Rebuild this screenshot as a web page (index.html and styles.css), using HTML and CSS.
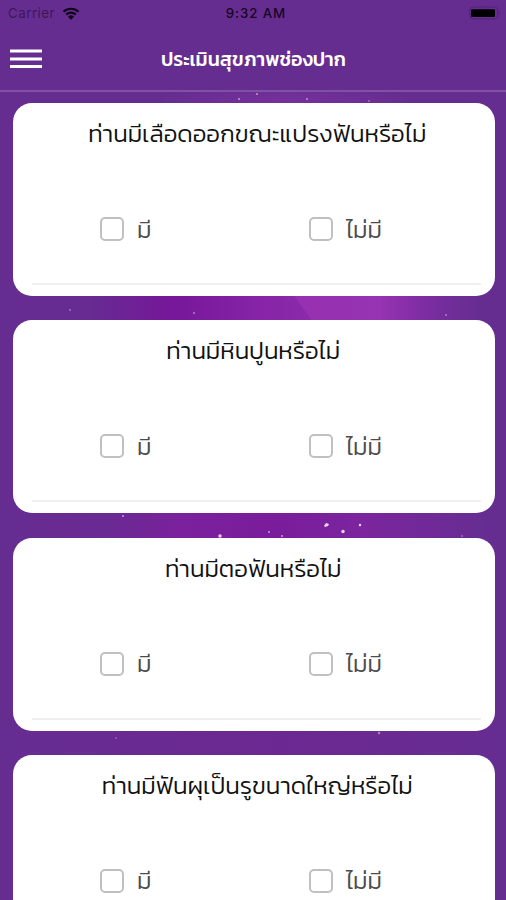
FILE: index.html
```html
<!DOCTYPE html>
<html lang="th">
<head>
<meta charset="utf-8">
<title>ประเมินสุขภาพช่องปาก</title>
<link rel="stylesheet" href="styles.css">
</head>
<body>
<svg class="backdrop" viewBox="0 0 506 900" aria-hidden="true">
  <defs>
    <radialGradient id="top"><stop offset="0" stop-color="#75309b"/><stop offset="1" stop-color="#672d91"/></radialGradient>
    <linearGradient id="glow"><stop offset="0" stop-color="#662d91"/><stop offset=".18" stop-color="#672b92"/><stop offset=".34" stop-color="#761799"/><stop offset=".52" stop-color="#8724a7"/><stop offset=".68" stop-color="#8d2fad"/><stop offset=".8" stop-color="#822da5"/><stop offset=".95" stop-color="#662d91"/></linearGradient>
    <linearGradient id="ray"><stop offset="0" stop-color="#9730b2"/><stop offset=".6" stop-color="#9634b2"/><stop offset="1" stop-color="#7f2ba3" stop-opacity="0"/></linearGradient>
    <linearGradient id="mid"><stop offset="0" stop-color="#662d91"/><stop offset=".22" stop-color="#6a2993"/><stop offset=".36" stop-color="#7b219c"/><stop offset=".54" stop-color="#7a1c9b"/><stop offset=".72" stop-color="#7b259e"/><stop offset=".96" stop-color="#662d91"/></linearGradient>
    <linearGradient id="low"><stop offset="0" stop-color="#662d91"/><stop offset=".55" stop-color="#6c2892"/><stop offset="1" stop-color="#662d91"/></linearGradient>
  </defs>
  <ellipse cx="285" cy="100" rx="120" ry="14" fill="url(#top)"/>
  <path fill="url(#glow)" d="M0 290h506v36H0z"/>
  <path fill="url(#ray)" d="M290 290h150v36H316z"/>
  <path fill="url(#mid)" d="M0 508h506v36H0z"/>
  <path fill="url(#low)" d="M0 725h506v36H0z"/>
  <g fill="#c29bd2">
    <circle cx="239" cy="99" r="1"/><circle cx="257" cy="94" r="1"/><circle cx="307" cy="99" r="1"/><circle cx="369" cy="101" r=".8"/>
    <circle cx="70" cy="310" r="1.1" opacity=".6"/><circle cx="194" cy="313" r="1.2" opacity=".6"/><circle cx="446" cy="315" r="1.1" opacity=".7"/>
    <circle cx="123" cy="516" r="1"/><circle cx="269" cy="532" r="1"/><circle cx="282" cy="536" r="1.1"/><circle cx="462" cy="536" r=".8"/>
    <circle cx="116" cy="738" r=".9" opacity=".5"/><circle cx="379" cy="733" r="1.3" opacity=".7"/>
  </g>
  <g fill="#f2d7f7">
    <circle cx="220" cy="536" r="1.7"/><circle cx="343" cy="531.500" r="1.7"/><circle cx="360" cy="525" r="1.2"/><path d="m324 526 2-3 3 1-1 2-3 1z"/>
  </g>
</svg>

<header class="header">
  <div class="status">
    <span class="carrier">Carrier
      <svg class="wifi" viewBox="0 0 18 13" aria-hidden="true"><path d="M1.500 4.700a11 11 0 0 1 15 0M4.200 7.600a7 7 0 0 1 9.600 0" fill="none" stroke="currentColor" stroke-width="2.200"/><path d="M6 9.700a4.300 4.300 0 0 1 6 0L9 12.800z" fill="currentColor"/></svg>
    </span>
    <span class="time">9:32 AM</span>
    <svg class="battery" viewBox="0 0 32 14" aria-hidden="true"><rect x=".8" y="1" width="28" height="12" rx="3.500" fill="none" stroke="#552079"/><rect x="2" y="3.200" width="24" height="7.800" rx="1" fill="#000"/><path d="M30 5.200q1.700 1.800 0 3.600z" fill="#4b1b70"/></svg>
  </div>
  <div class="bar">
    <svg class="menu" viewBox="0 0 32 20" role="img"><path d="M0 2h32M0 10h32M0 17.500h32" stroke="#fff" stroke-width="3"/></svg>
    <h1 class="title">ประเมินสุขภาพช่องปาก</h1>
  </div>
</header>

<main class="list">
  <section class="card">
    <h2 class="question question-long">ท่านมีเลือดออกขณะแปรงฟันหรือไม่</h2>
    <div class="options"><label class="option"><span class="box"></span>มี</label><label class="option"><span class="box"></span>ไม่มี</label></div>
  </section>
  <section class="card">
    <h2 class="question">ท่านมีหินปูนหรือไม่</h2>
    <div class="options"><label class="option"><span class="box"></span>มี</label><label class="option"><span class="box"></span>ไม่มี</label></div>
  </section>
  <section class="card">
    <h2 class="question">ท่านมีตอฟันหรือไม่</h2>
    <div class="options"><label class="option"><span class="box"></span>มี</label><label class="option"><span class="box"></span>ไม่มี</label></div>
  </section>
  <section class="card">
    <h2 class="question question-long">ท่านมีฟันผุเป็นรูขนาดใหญ่หรือไม่</h2>
    <div class="options"><label class="option"><span class="box"></span>มี</label><label class="option"><span class="box"></span>ไม่มี</label></div>
  </section>
</main>
</body>
</html>
```
FILE: styles.css
```css
* { box-sizing: border-box; }

html { height: 900px; overflow: hidden; }

body {
  margin: 0;
  height: 900px;
  overflow: hidden;
  position: relative;
  background: #662d91;
  font-family: "Kanit", "Prompt", "Noto Sans Thai", sans-serif;
}

.backdrop {
  position: absolute;
  inset: 0;
  width: 506px;
  height: 900px;
}

.header {
  position: relative;
  height: 92px;
  background: #662d91;
  border-bottom: 2px solid #8152a3;
}

.status {
  display: grid;
  grid-template-columns: 1fr auto 1fr;
  align-items: center;
  height: 26px;
  padding: 0 5px 0 8px;
  font: 13.3px "Inter", "Liberation Sans", sans-serif;
  color: #170522;
}

.carrier {
  display: flex;
  align-items: center;
  gap: 7px;
  color: #3c1859;
  letter-spacing: .5px;
}

.wifi { width: 18px; height: 13px; color: #12031c; }

.time { padding-left: 3px; font-weight: 500; letter-spacing: .9px; }

.battery { width: 32px; height: 14px; justify-self: end; }

.bar {
  display: grid;
  grid-template-columns: 32px 1fr 32px;
  align-items: center;
  height: 65px;
  padding: 0 10px;
}

.menu { width: 32px; height: 20px; }

.title {
  margin: 0;
  font-size: 19.6px;
  font-weight: 500;
  line-height: 30px;
  text-align: center;
  text-indent: 1px;
  color: #fff;
}

.list {
  position: relative;
  display: flex;
  flex-direction: column;
  gap: 24.3px;
  height: 808px;
  overflow: hidden;
  padding: 11px 11.5px 0 12.5px;
}

.card {
  flex: none;
  height: 193px;
  padding: 13px 14px 0 19.5px;
  border-radius: 19px;
  background: #fff;
}

.question {
  margin: 0;
  font-size: 24.2px;
  font-weight: 300;
  line-height: 36px;
  text-align: center;
  text-indent: -6px;
  color: #111;
}

.question-long { text-indent: 2px; }

.options {
  display: grid;
  grid-template-columns: 209px 1fr;
  height: 133px;
  padding: 59px 0 0 68.4px;
  border-bottom: 2px solid #f0f0f0;
}

.option {
  display: flex;
  align-items: center;
  gap: 12.500px;
  height: 36px;
  font-size: 24.2px;
  font-weight: 300;
  color: #4c4c4c;
}

.box {
  width: 24px;
  height: 24px;
  border: 2px solid #c0c0c0;
  border-radius: 5px;
}
```
